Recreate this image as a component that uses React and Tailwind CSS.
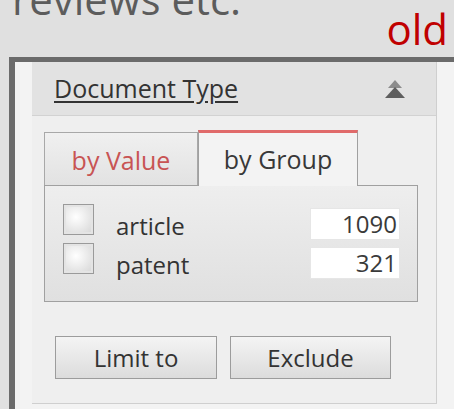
import React from 'react';

// Double up-arrow used to collapse a facet panel
function CollapseIcon() {
  return (
    <svg width="22" height="20" viewBox="0 0 22 20">
      <polygon points="11,1 18,9 4,9" fill="#8c8c8c" />
      <polygon points="11,8 21,19 1,19" fill="#5e5e5e" />
    </svg>
  );
}

function Checkbox() {
  return (
    <div className="w-[31px] h-[31px] shrink-0 border border-[#9a9a9a] bg-[#e4e4e4] p-[2px]">
      <div className="w-full h-full bg-[radial-gradient(circle_at_40%_40%,#ffffff,#d9d9d9)]" />
    </div>
  );
}

function GroupRow({ label, count }) {
  return (
    <div className="flex items-start">
      <Checkbox />
      <span className="ml-[22px] mt-[10px] text-[24px] leading-none text-[#333]">{label}</span>
      <div className="ml-auto mt-[4px] w-[90px] h-[32px] bg-white border border-[#e6e6e6] flex items-center justify-end pr-[2px] text-[24px] leading-none text-[#3a3a3a]">
        {count}
      </div>
    </div>
  );
}

function Button({ children, width }) {
  return (
    <button className={`${width} h-[43px] border border-[#9c9c9c] bg-gradient-to-b from-[#f4f4f4] via-[#e8e8e8] to-[#dcdcdc] text-[24px] leading-none text-[#333] flex items-center justify-center`}>
      {children}
    </button>
  );
}

export default function App() {
  const groups = [
    { label: 'article', count: 1090 },
    { label: 'patent', count: 321 },
  ];

  return (
    <div className="w-[454px] h-[409px] overflow-hidden bg-[#e0e0e0] font-['Open_Sans',sans-serif]">
      {/* slide heading, partly cut off */}
      <div className="h-[57px] flex flex-col">
        <p className="-mt-[22px] pl-[12px] text-[42px] leading-none text-[#5c5c5c]">reviews etc.</p>
        <p className="self-end -mt-[12px] pr-[6px] text-[42px] leading-none text-[#c00000]">old</p>
      </div>

      <div className="ml-[9px] h-[352px] border-l-[6px] border-t-[5px] border-[#6b6b6b] bg-[#f3f3f3] pl-[17px] flex">
        <div className="w-[405px] h-[342px] border-r border-b border-[#cfcfcf] bg-[#efefef] flex flex-col">
          {/* facet header */}
          <div className="h-[54px] shrink-0 border-b border-[#d2d2d2] bg-[#e2e2e2] flex items-center justify-between pl-[22px] pr-[30px]">
            <span className="text-[25px] leading-none underline underline-offset-[3px] text-[#333]">Document Type</span>
            <CollapseIcon />
          </div>

          {/* tabs */}
          <div className="pt-[14px] px-[12px]">
            <div className="flex items-end">
              <div className="w-[154px] h-[53px] border border-b-0 border-[#a8a8a8] bg-gradient-to-b from-[#f0f0f0] to-[#e2e2e2] flex items-center justify-center pt-[2px] text-[25px] leading-none text-[#c85454]">
                by Value
              </div>
              <div className="relative z-10 -mb-px w-[160px] h-[56px] border-x border-[#a0a0a0] border-t-[3px] border-t-[#e06a6a] bg-[#f3f3f3] flex items-center justify-center text-[25px] leading-none text-[#383838]">
                by Group
              </div>
            </div>
            <div className="w-[374px] h-[117px] border border-[#a0a0a0] bg-gradient-to-b from-[#eeeeee] to-[#e0e0e0] pt-[18px] pl-[18px] pr-[17px] flex flex-col gap-[3px]">
              {groups.map((g) => (
                <GroupRow key={g.label} label={g.label} count={g.count} />
              ))}
            </div>
          </div>

          {/* actions */}
          <div className="mt-[34px] pl-[23px] flex gap-[13px]">
            <Button width="w-[162px]">Limit to</Button>
            <Button width="w-[161px]">Exclude</Button>
          </div>
        </div>
      </div>
    </div>
  );
}
